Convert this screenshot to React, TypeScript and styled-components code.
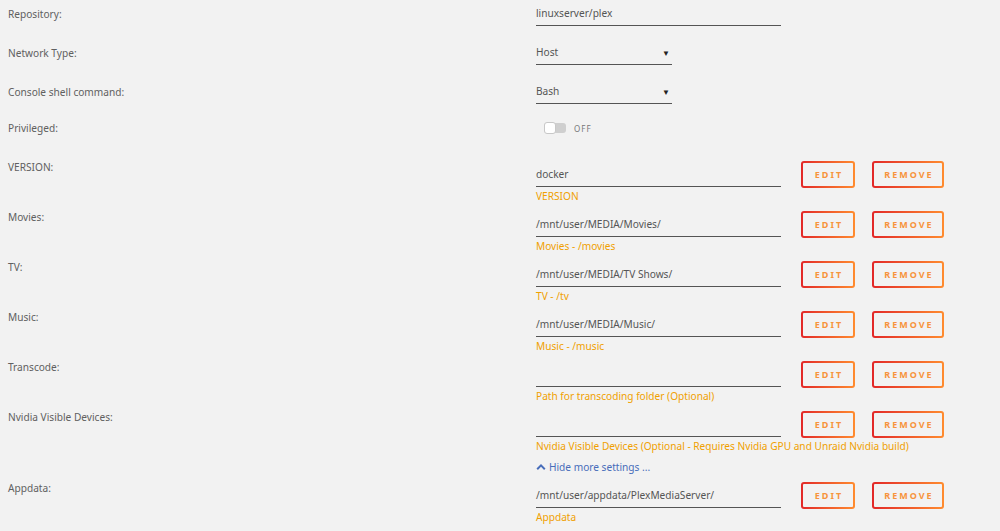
import React from "react";
import styled, { createGlobalStyle } from "styled-components";

const Global = createGlobalStyle`
  html, body { margin: 0; padding: 0; background: #f2f2f2; }
  body { font-family: "Noto Sans", "Liberation Sans", sans-serif; font-size: 10.15px; color: #606060; }
`;

const Page = styled.div`
  width: 1000px;
  height: 531px;
  overflow: hidden;
  padding-left: 8px;
  box-sizing: border-box;
`;

const Row = styled.div<{ $h: number }>`
  display: flex;
  height: ${(p) => p.$h}px;
`;

const Label = styled.div<{ $lh: number }>`
  width: 528px;
  flex: none;
  line-height: ${(p) => p.$lh}px;
  color: #606060;
`;

const Field = styled.div`
  display: flex;
  flex-direction: column;
`;

const TextInput = styled.div<{ $w: number }>`
  width: ${(p) => p.$w}px;
  height: 26px;
  box-sizing: border-box;
  border-bottom: 1px solid #555;
  line-height: 27px;
  color: #555;
  display: flex;
  justify-content: space-between;
`;

const Arrow = styled.span`
  font-size: 8px;
  color: #222;
  padding-right: 2px;
`;

const ToggleWrap = styled.div`
  display: flex;
  align-items: center;
  height: 22px;
  padding-left: 8px;
  gap: 8px;
`;

const Track = styled.div`
  width: 22px;
  height: 10px;
  border-radius: 3px;
  background: #cfcfcf;
  position: relative;
`;

const Knob = styled.div`
  position: absolute;
  left: 0;
  top: -1px;
  width: 10px;
  height: 10px;
  border-radius: 3px;
  background: #fff;
  border: 1px solid #c8c8c8;
`;

const ToggleText = styled.span`
  font-size: 8px;
  letter-spacing: 1px;
  color: #777;
`;

const ConfigBody = styled.div`
  display: flex;
  flex-direction: column;
`;

const ConfigLine = styled.div`
  display: flex;
  align-items: flex-start;
  padding-top: 8px;
`;

const ConfigInput = styled.div`
  width: 245px;
  height: 26px;
  box-sizing: border-box;
  border-bottom: 1px solid #555;
  line-height: 27px;
  color: #555;
`;

const Button = styled.div<{ $w: number; $ml: number }>`
  width: ${(p) => p.$w}px;
  height: 27px;
  margin-left: ${(p) => p.$ml}px;
  box-sizing: border-box;
  border: 2px solid transparent;
  border-radius: 3px;
  background: linear-gradient(#f2f2f2, #f2f2f2) padding-box,
    linear-gradient(90deg, #e22828, #ff8c2f) border-box;
  display: flex;
  align-items: center;
  justify-content: center;
  font-size: 9px;
  font-weight: 700;
  letter-spacing: 2px;
  color: #f7943c;
  padding-left: 2px;
`;

const Desc = styled.div`
  color: #f0a000;
  line-height: 17px;
`;

const HideRow = styled.div`
  display: flex;
  height: 21px;
  padding-left: 528px;
  padding-top: 7px;
  box-sizing: border-box;
`;

const HideLink = styled.a`
  display: flex;
  align-items: center;
  gap: 3px;
  height: 14px;
  color: #486dba;
  text-decoration: none;
`;

const Chevron = () => (
  <svg width="10" height="8" viewBox="0 0 10 8">
    <path d="M1.2 6.2 L5 2.4 L8.8 6.2" fill="none" stroke="#486dba" strokeWidth="2" />
  </svg>
);

type Cfg = { label: string; value: string; desc: string };

const configs1: Cfg[] = [
  { label: "VERSION:", value: "docker", desc: "VERSION" },
  { label: "Movies:", value: "/mnt/user/MEDIA/Movies/", desc: "Movies - /movies" },
  { label: "TV:", value: "/mnt/user/MEDIA/TV Shows/", desc: "TV - /tv" },
  { label: "Music:", value: "/mnt/user/MEDIA/Music/", desc: "Music - /music" },
  { label: "Transcode:", value: "", desc: "Path for transcoding folder (Optional)" },
  {
    label: "Nvidia Visible Devices:",
    value: "",
    desc: "Nvidia Visible Devices (Optional - Requires Nvidia GPU and Unraid Nvidia build)",
  },
];

const ConfigRow = ({ c }: { c: Cfg }) => (
  <Row $h={50}>
    <Label $lh={28}>{c.label}</Label>
    <ConfigBody>
      <ConfigLine>
        <ConfigInput>{c.value}</ConfigInput>
        <Button $w={54} $ml={20}>EDIT</Button>
        <Button $w={72} $ml={17}>REMOVE</Button>
      </ConfigLine>
      <Desc>{c.desc}</Desc>
    </ConfigBody>
  </Row>
);

export default function App() {
  return (
    <Page>
      <Global />
      <Row $h={39}>
        <Label $lh={28}>Repository:</Label>
        <Field>
          <TextInput $w={245}>linuxserver/plex</TextInput>
        </Field>
      </Row>
      <Row $h={39}>
        <Label $lh={28}>Network Type:</Label>
        <Field>
          <TextInput $w={136}>
            Host<Arrow>▼</Arrow>
          </TextInput>
        </Field>
      </Row>
      <Row $h={39}>
        <Label $lh={28}>Console shell command:</Label>
        <Field>
          <TextInput $w={136}>
            Bash<Arrow>▼</Arrow>
          </TextInput>
        </Field>
      </Row>
      <Row $h={36}>
        <Label $lh={22}>Privileged:</Label>
        <ToggleWrap>
          <Track>
            <Knob />
          </Track>
          <ToggleText>OFF</ToggleText>
        </ToggleWrap>
      </Row>
      {configs1.map((c) => (
        <ConfigRow key={c.label} c={c} />
      ))}
      <HideRow>
        <HideLink href="#">
          <Chevron />
          Hide more settings ...
        </HideLink>
      </HideRow>
      <ConfigRow c={{ label: "Appdata:", value: "/mnt/user/appdata/PlexMediaServer/", desc: "Appdata" }} />
    </Page>
  );
}
